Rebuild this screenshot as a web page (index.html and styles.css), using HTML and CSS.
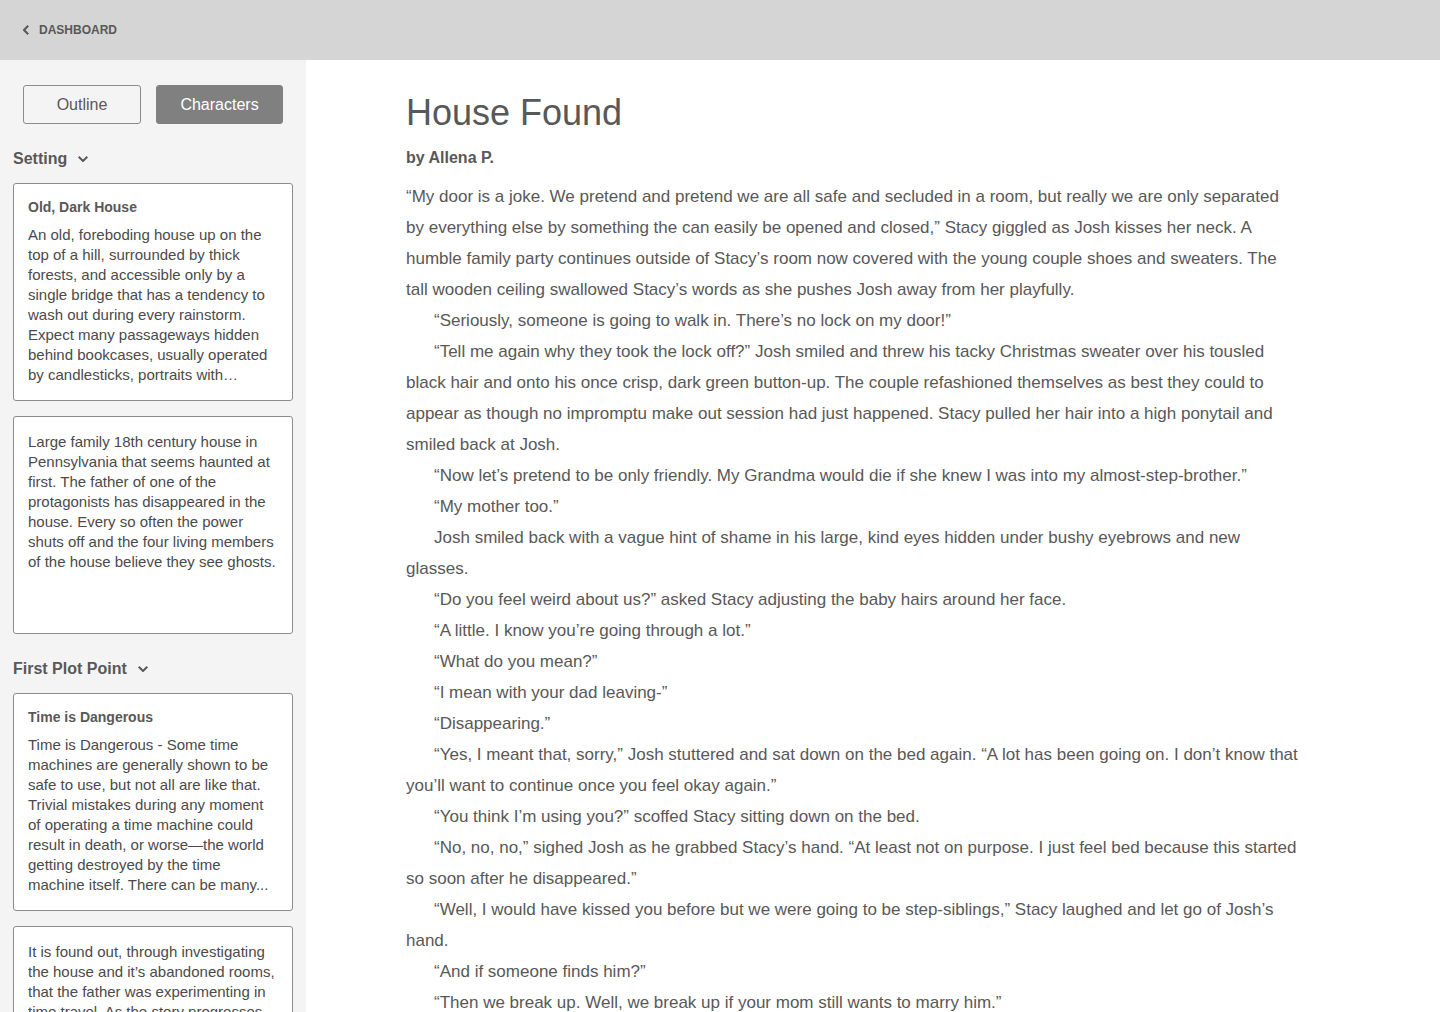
FILE: index.html
```html
<!DOCTYPE html>
<html lang="en">
<head>
<meta charset="utf-8">
<title>House Found</title>
<meta name="viewport" content="width=device-width, initial-scale=1">
<link rel="stylesheet" href="styles.css">
</head>
<body>
<header class="topbar">
  <a class="back" href="#dashboard">
    <svg class="back-icon" viewBox="0 0 6 10" aria-hidden="true"><path d="M5.2 .7 1 5l4.2 4.3"/></svg>
    DASHBOARD
  </a>
</header>
<div class="workspace">
  <aside class="sidebar">
    <div class="tabs">
      <button class="tab tab-outline" type="button">Outline</button>
      <button class="tab tab-active" type="button">Characters</button>
    </div>
    <section class="group">
      <h2 class="group-title"><button class="toggle" type="button">Setting <svg class="chevron" viewBox="0 0 10 6" aria-hidden="true"><path d="M.7 .8 5 5 9.300 .8"/></svg></button></h2>
      <article class="card">
        <h3 class="card-title">Old, Dark House</h3>
        <p class="card-text">An old, foreboding house up on the top of a hill, surrounded by thick forests, and accessible only by a single bridge that has a tendency to wash out during every rainstorm. Expect many passageways hidden behind bookcases, usually operated by candlesticks, portraits with…</p>
      </article>
      <article class="card">
        <p class="card-text">Large family 18th century house in Pennsylvania that seems haunted at first. The father of one of the protagonists has disappeared in the house. Every so often the power shuts off and the four living members of the house believe they see ghosts.</p>
      </article>
    </section>
    <section class="group">
      <h2 class="group-title"><button class="toggle" type="button">First Plot Point <svg class="chevron" viewBox="0 0 10 6" aria-hidden="true"><path d="M.7 .8 5 5 9.300 .8"/></svg></button></h2>
      <article class="card">
        <h3 class="card-title">Time is Dangerous</h3>
        <p class="card-text">Time is Dangerous - Some time machines are generally shown to be safe to use, but not all are like that. Trivial mistakes during any moment of operating a time machine could result in death, or worse—the world getting destroyed by the time machine itself. There can be many...</p>
      </article>
      <article class="card">
        <p class="card-text">It is found out, through investigating the house and it’s abandoned rooms, that the father was experimenting in time travel. As the story progresses,</p>
      </article>
    </section>
  </aside>
  <main class="page">
    <article class="story">
      <h1 class="story-title">House Found</h1>
      <p class="byline">by Allena P.</p>
      <div class="prose">
        <p>“My door is a joke. We pretend and pretend we are all safe and secluded in a room, but really we are only separated by everything else by something the can easily be opened and closed,” Stacy giggled as Josh kisses her neck. A humble family party continues outside of Stacy’s room now covered with the young couple shoes and sweaters. The tall wooden ceiling swallowed Stacy’s words as she pushes Josh away from her playfully.</p>
        <p>“Seriously, someone is going to walk in. There’s no lock on my door!”</p>
        <p>“Tell me again why they took the lock off?” Josh smiled and threw his tacky Christmas sweater over his tousled black hair and onto his once crisp, dark green button-up. The couple refashioned themselves as best they could to appear as though no impromptu make out session had just happened. Stacy pulled her hair into a high ponytail and smiled back at Josh.</p>
        <p>“Now let’s pretend to be only friendly. My Grandma would die if she knew I was into my almost-step-brother.”</p>
        <p>“My mother too.”</p>
        <p>Josh smiled back with a vague hint of shame in his large, kind eyes hidden under bushy eyebrows and new glasses.</p>
        <p>“Do you feel weird about us?” asked Stacy adjusting the baby hairs around her face.</p>
        <p>“A little. I know you’re going through a lot.”</p>
        <p>“What do you mean?”</p>
        <p>“I mean with your dad leaving-”</p>
        <p>“Disappearing.”</p>
        <p>“Yes, I meant that, sorry,” Josh stuttered and sat down on the bed again. “A lot has been going on. I don’t know that you’ll want to continue once you feel okay again.”</p>
        <p>“You think I’m using you?” scoffed Stacy sitting down on the bed.</p>
        <p>“No, no, no,” sighed Josh as he grabbed Stacy’s hand. “At least not on purpose. I just feel bed because this started so soon after he disappeared.”</p>
        <p>“Well, I would have kissed you before but we were going to be step-siblings,” Stacy laughed and let go of Josh’s hand.</p>
        <p>“And if someone finds him?”</p>
        <p>“Then we break up. Well, we break up if your mom still wants to marry him.”</p>
      </div>
    </article>
  </main>
</div>
</body>
</html>
```
FILE: styles.css
```css
* {
  box-sizing: border-box;
}

body {
  margin: 0;
  height: 100vh;
  display: flex;
  flex-direction: column;
  background: #fff;
  color: #585858;
  font-family: "Liberation Sans", Arial, sans-serif;
  font-size: 16px;
}

h1, h2, h3, p {
  margin: 0;
}

button {
  font: inherit;
  color: inherit;
  cursor: pointer;
}

svg {
  fill: none;
  stroke: currentColor;
  stroke-width: 2;
}

.topbar {
  flex: 0 0 60px;
  display: flex;
  align-items: center;
  padding: 0 23px;
  background: #d5d5d5;
}

.back {
  display: flex;
  align-items: center;
  gap: 10px;
  color: inherit;
  font-size: 12px;
  font-weight: bold;
  text-decoration: none;
}

.back-icon {
  width: 6px;
  height: 10px;
}

.workspace {
  flex: 1;
  min-height: 0;
  display: flex;
}

.sidebar {
  flex: 0 0 306px;
  padding: 25px 13px 0;
  overflow: hidden;
  background: #f4f4f4;
}

.tabs {
  display: flex;
  gap: 15px;
  padding: 0 10px;
}

.tab {
  flex: 0 0 127px;
  height: 39px;
  padding: 0;
  border: 1px solid #8c8c8c;
  border-radius: 3px;
  background: transparent;
}

.tab-outline {
  flex-basis: 118px;
}

.tab-active {
  border-color: #808080;
  background: #808080;
  color: #fff;
}

.group {
  display: flex;
  flex-direction: column;
  gap: 15px;
  padding-top: 25px;
}

.group-title {
  font-size: 16px;
  line-height: 19px;
}

.toggle {
  display: flex;
  align-items: center;
  gap: 11px;
  padding: 0;
  border: 0;
  background: none;
}

.chevron {
  width: 10px;
  height: 6px;
}

.card {
  min-height: 218px;
  padding: 15px 14px;
  border: 1px solid #8c8c8c;
  border-radius: 3px;
  background: #fff;
}

.card-title {
  margin-bottom: 10px;
  font-size: 14px;
  line-height: 16px;
}

.card-text {
  color: #4a4a4a;
  font-size: 15px;
  line-height: 20px;
}

.page {
  flex: 1;
  min-width: 0;
  padding: 32px 100px 0;
  overflow: hidden;
}

.story {
  max-width: 894px;
}

.story-title {
  font-size: 36px;
  font-weight: normal;
  line-height: 42px;
}

.byline {
  margin: 14px 0 13px;
  font-weight: bold;
  line-height: 20px;
}

.prose {
  font-size: 17px;
  line-height: 31px;
}

.prose p + p {
  text-indent: 28px;
}
```
